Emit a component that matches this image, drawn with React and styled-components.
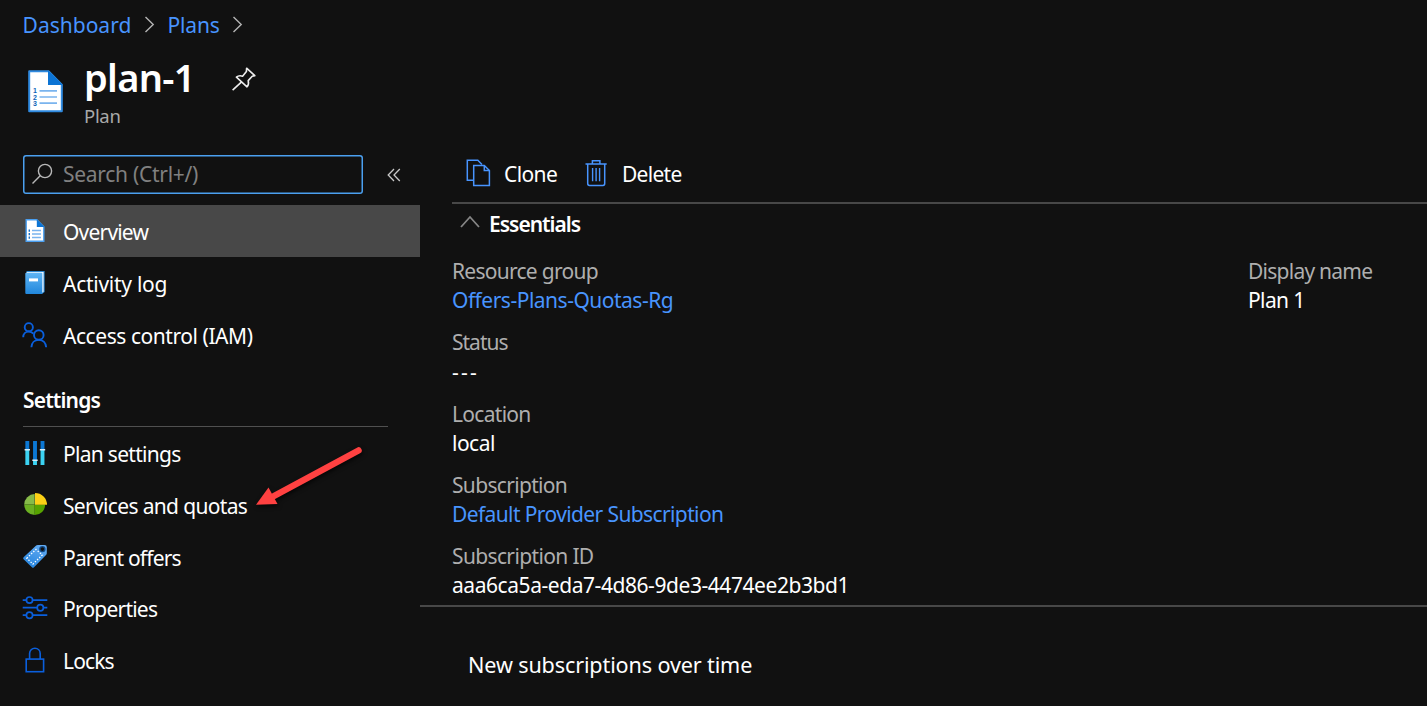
import React from "react";
import styled, { createGlobalStyle } from "styled-components";

const Global = createGlobalStyle`
  * { box-sizing: border-box; }
  body { margin: 0; background: #111; overflow: hidden; }
`;

const Page = styled.div`
  position: relative;
  width: 1427px;
  height: 706px;
  overflow: hidden;
  background: #111;
  color: #fff;
  font-family: "Noto Sans", "Open Sans", sans-serif;
  font-size: 21px;
  line-height: 30px;
`;

const Text = styled.span`
  white-space: nowrap;
  letter-spacing: ${(p) => p.$ls || 0}px;
  color: ${(p) => p.$color || "inherit"};
`;

const Breadcrumb = styled.nav`
  display: flex;
  align-items: center;
  height: 50px;
  padding-left: 22.6px;
`;

const Crumb = styled(Text)`
  width: ${(p) => p.$w}px;
  color: #4894fe;
`;

const Chevron = styled.svg`
  display: block;
  margin-right: ${(p) => p.$gap || 0}px;
`;

const Header = styled.header`
  display: flex;
  height: 95px;
  padding: 3px 0 0 26px;
`;

const HeaderIcon = styled.svg`
  display: block;
  margin-top: 15px;
  flex: none;
`;

const TitleBlock = styled.div`
  display: flex;
  flex-direction: column;
  width: 147px;
  margin-left: 18px;
`;

const Title = styled.h1`
  margin: 0 0 1px;
  font-size: 38px;
  line-height: 48px;
  font-weight: 600;
  white-space: nowrap;
  letter-spacing: ${(p) => p.$ls}px;
`;

const Subtitle = styled(Text)`
  font-size: 18.5px;
  line-height: 28px;
  color: #a9a9a9;
`;

const Pin = styled.svg`
  display: block;
  margin-top: 14px;
`;

const Body = styled.div`
  display: flex;
  height: 561px;
`;

const Sidebar = styled.aside`
  width: 420px;
  flex: none;
  padding-top: 10px;
`;

const SearchRow = styled.div`
  display: flex;
  align-items: center;
  padding-left: 22.5px;
  margin-bottom: 11px;
`;

const SearchBox = styled.div`
  display: flex;
  align-items: center;
  width: 340.5px;
  height: 39px;
  padding: 0 0 2px 8px;
  box-shadow: inset 0 0 0 1.5px #4ba0f0;
  border-radius: 3px;
  gap: 10.5px;
`;

const Collapse = styled.svg`
  display: block;
  margin-left: 24px;
`;

const NavItem = styled.div`
  display: flex;
  align-items: center;
  height: 51.82px;
  padding: 2px 0 0 22px;
  gap: 15px;
  background: ${(p) => (p.$active ? "#484848" : "transparent")};
  svg { display: block; flex: none; margin-top: -2px; }
`;

const Section = styled.div`
  width: 365px;
  height: 66px;
  margin: 0.24px 0 0.4px 23px;
  padding-top: 24px;
  border-bottom: 1px solid #505050;
  font-weight: 600;
`;

const Main = styled.main`
  flex: 1;
  display: flex;
  flex-direction: column;
`;

const Toolbar = styled.div`
  display: flex;
  align-items: center;
  height: 59px;
  margin-left: 32px;
  padding: 1px 0 0 14px;
  border-bottom: 2px solid #484848;
`;

const ToolButton = styled.div`
  display: flex;
  align-items: center;
  width: ${(p) => p.$w}px;
  gap: 13px;
  svg { display: block; margin-top: -2px; }
`;

const EssentialsHead = styled.div`
  display: flex;
  align-items: center;
  gap: 8px;
  height: 39px;
  margin-left: 41px;
  font-weight: 600;
  svg { display: block; margin: -3px 1px 0 -1px; }
`;

const Essentials = styled.div`
  display: flex;
  height: 364px;
  padding: 14px 0 0 32px;
  border-bottom: 2px solid #484848;
`;

const Column = styled.div`
  display: flex;
  flex-direction: column;
  width: ${(p) => p.$w}px;
`;

const Field = styled.div`
  display: flex;
  flex-direction: column;
  height: 71.3px;
  line-height: 29.3px;
  flex: none;
`;

const ChartTitle = styled.div`
  padding: 43px 0 0 48px;
  font-size: 21.6px;
`;

const Arrow = styled.svg`
  position: absolute;
  left: 250px;
  top: 438px;
  pointer-events: none;
  filter: drop-shadow(1px 2px 2px rgba(0, 0, 0, 0.7));
`;

const RightChevron = ({ gap }) => (
  <Chevron $gap={gap} width="12" height="18" viewBox="0 0 12 18" fill="none" stroke="#b4b4b4" strokeWidth="1.4">
    <path d="M1.5 1 L9.2 8.5 L1.5 16" />
  </Chevron>
);

const OverviewIcon = () => (
  <svg width="26" height="26" viewBox="0 0 26 26">
    <path d="M4.2 1.7H14.8L21.8 8.7V23.3H4.2Z" fill="#fff" stroke="#4b9ff0" strokeWidth="1.4" />
    <path d="M14.8 1.2V9H22.5Z" fill="#0c74d4" />
    <path d="M10 12.5H19M10 16H19M10 19.5H19" stroke="#7ab4ee" strokeWidth="1.3" />
    <path d="M7.3 11.5V20.7" stroke="#1d72c8" strokeWidth="1.4" strokeDasharray="2.2 1.3" />
  </svg>
);

const LogIcon = () => (
  <svg width="26" height="26" viewBox="0 0 26 26">
    <defs>
      <linearGradient id="book" x1="0" y1="0" x2="0" y2="1">
        <stop offset="0" stopColor="#5eb4f4" />
        <stop offset="1" stopColor="#2187dc" />
      </linearGradient>
    </defs>
    <path d="M4.5 1H22.6V22L20 24H5.5Z" fill="#2c86cf" />
    <path d="M4.5 1.9H21.6V21.7L19.8 23V4H5Z" fill="#eef6fd" />
    <rect x="3.3" y="2.8" width="17" height="21.2" rx="1" fill="url(#book)" />
    <rect x="7" y="8.4" width="9" height="3" fill="#fff" />
  </svg>
);

const AccessIcon = () => (
  <svg width="26" height="26" viewBox="0 0 26 26" fill="none" stroke="#0a5fdc" strokeWidth="1.9">
    <circle cx="6.8" cy="5.2" r="4.1" />
    <path d="M1.2 15.3C1.2 11.7 3.5 9.6 6.6 9.6C8.6 9.6 10.2 10.3 11.4 11.6" />
    <circle cx="16.8" cy="13" r="4.8" />
    <path d="M9.4 25.3C9.6 20.8 12.6 17.9 16.8 17.9C21 17.9 23.9 20.8 24.2 25.3" />
  </svg>
);

const SlidersIcon = () => (
  <svg width="26" height="26" viewBox="0 0 26 26">
    <path d="M5.3 1V10M13 1V20M20.5 1V10" stroke="#0c78d4" strokeWidth="3.9" />
    <path d="M5.3 10V25M13 20.5V25M20.5 10V25" stroke="#3bd2f2" strokeWidth="3.9" />
    <path d="M2.6 9.8H8M10.3 20.2H15.7M17.8 9.8H23.2" stroke="#d8eefa" strokeWidth="1.5" />
  </svg>
);

const PieIcon = () => (
  <svg width="26" height="26" viewBox="0 0 26 26">
    <path d="M12.7 12.6V2.1A10.5 10.5 0 0 0 2.2 12.6Z" fill="#86bb49" />
    <path d="M12.7 12.6H2.2A10.5 10.5 0 0 0 12.7 23.1Z" fill="#6bb022" />
    <path d="M12.7 12.6V23.1A10.5 10.5 0 0 0 23.2 12.6Z" fill="#57a300" />
    <path d="M13 12.8V0.9A12 11.7 0 0 1 25 12.8Z" fill="#fcd116" />
  </svg>
);

const TagIcon = () => (
  <svg width="26" height="26" viewBox="0 0 26 26">
    <defs>
      <linearGradient id="tag" x1="0.7" y1="0" x2="0.3" y2="1">
        <stop offset="0" stopColor="#62abf3" />
        <stop offset="1" stopColor="#2483dc" />
      </linearGradient>
    </defs>
    <path d="M1.6 13.2L13.6 1.9Q14.5 1 16 1H22.5Q24.8 1 24.8 3.2V9.2Q24.8 10.2 24 11L12 23.3Q10.9 24.3 9.9 23.3L1.6 15.2Q.6 14.2 1.6 13.2Z" fill="url(#tag)" />
    <path d="M4.8 14.2L14 5.4L20.3 11L10.9 20.1Z" fill="none" stroke="#fff" strokeWidth="1.3" strokeDasharray="1.4 1.6" />
    <circle cx="20.4" cy="5.1" r="3.2" fill="#114a86" />
    <circle cx="20.4" cy="5.1" r="1.8" fill="#111" />
  </svg>
);

const PropertiesIcon = () => (
  <svg width="26" height="26" viewBox="0 0 26 26" fill="none" stroke="#0a5fdc" strokeWidth="1.7">
    <path d="M.7 5.1H4.4M10.6 5.1H25.3M.7 12.7H15.2M21.4 12.7H25.3M.7 20.2H4.4M10.6 20.2H25.3" />
    <circle cx="7.5" cy="5.1" r="3.1" />
    <circle cx="18.3" cy="12.7" r="3.1" />
    <circle cx="7.5" cy="20.2" r="3.1" />
  </svg>
);

const LockIcon = () => (
  <svg width="26" height="26" viewBox="0 0 26 26" fill="none" stroke="#0a5fdc" strokeWidth="1.6">
    <rect x="4.2" y="12.1" width="17.4" height="12.6" />
    <path d="M7.6 12V6.6C7.6 3.4 9.9 1.3 12.9 1.3C15.9 1.3 18.2 3.4 18.2 6.6V12" />
  </svg>
);

const topItems = [
  ["Overview", OverviewIcon, -0.8],
  ["Activity log", LogIcon, -0.27],
  ["Access control (IAM)", AccessIcon, -0.44],
];
const settingsItems = [
  ["Plan settings", SlidersIcon, -0.7],
  ["Services and quotas", PieIcon, -0.66],
  ["Parent offers", TagIcon, -0.81],
  ["Properties", PropertiesIcon, -0.78],
  ["Locks", LockIcon, -0.87],
];
const fields = [
  ["Resource group", -0.73, "Offers-Plans-Quotas-Rg", -0.5, true],
  ["Status", -1, "---", 2.2, false],
  ["Location", -0.7, "local", -0.5, false],
  ["Subscription", -0.68, "Default Provider Subscription", -0.61, true],
  ["Subscription ID", -0.64, "aaa6ca5a-eda7-4d86-9de3-4474ee2b3bd1", -0.44, false],
];

const Item = ({ data: [label, Icon, ls], active }) => (
  <NavItem $active={active}>
    <Icon />
    <Text $ls={ls}>{label}</Text>
  </NavItem>
);

const Info = ({ data: [label, ls, value, vls, link] }) => (
  <Field>
    <Text $ls={ls} $color="#aeaeae">{label}</Text>
    <Text $ls={vls} $color={link ? "#4894fe" : "#fff"}>{value}</Text>
  </Field>
);

export default function App() {
  return (
    <Page>
      <Global />
      <Breadcrumb>
        <Crumb $w={121}>Dashboard</Crumb>
        <RightChevron gap={12} />
        <Crumb $w={64} $ls={-0.2}>Plans</Crumb>
        <RightChevron />
      </Breadcrumb>
      <Header>
        <HeaderIcon width="40" height="46" viewBox="0 0 40 46">
          <path d="M3.2 3.2H22.5L35.8 16.6V43.2H3.2Z" fill="#fff" stroke="#2f8ae0" strokeWidth="2" strokeLinejoin="round" />
          <path d="M22 2.3V17H36.8Z" fill="#0c74d4" />
          <path d="M13.5 22.8H31M13.5 29H31M13.5 35.2H31" stroke="#7ab4ee" strokeWidth="1.7" />
          <g fill="#0c64b8" fontSize="7" fontWeight="700" fontFamily="Liberation Sans, sans-serif">
            <text x="7" y="25.2">1</text>
            <text x="7" y="31.6">2</text>
            <text x="7" y="38">3</text>
          </g>
        </HeaderIcon>
        <TitleBlock>
          <Title $ls={-0.7}>plan-1</Title>
          <Subtitle $ls={-0.3}>Plan</Subtitle>
        </TitleBlock>
        <Pin width="25" height="25" viewBox="0 0 25 25" fill="none" stroke="#eee" strokeWidth="1.6" strokeLinejoin="round">
          <path d="M15.6 1.2L23.8 8.6L21.2 9.2L17.2 13.6C17.9 16 17.5 18 16 19.8L5.4 10.2C7.2 8.6 9.4 8.4 11.6 9.2L15.4 4.6Z" />
          <path d="M10.6 14.8L1.6 23.2" />
        </Pin>
      </Header>
      <Body>
        <Sidebar>
          <SearchRow>
            <SearchBox>
              <svg width="22" height="22" viewBox="0 0 22 22" fill="none" stroke="#b8b8b8" strokeWidth="1.4">
                <circle cx="14" cy="8" r="6.6" />
                <path d="M9.4 12.6L1.5 20.4" />
              </svg>
              <Text $ls={-0.28} $color="#808080">Search (Ctrl+/)</Text>
            </SearchBox>
            <Collapse width="14" height="14" viewBox="0 0 14 14" fill="none" stroke="#c8c8c8" strokeWidth="1.3">
              <path d="M7 1L1.2 7L7 13M12.8 1L7 7L12.8 13" />
            </Collapse>
          </SearchRow>
          {topItems.map((d, i) => <Item key={d[0]} data={d} active={i === 0} />)}
          <Section><Text $ls={-0.85}>Settings</Text></Section>
          {settingsItems.map((d) => <Item key={d[0]} data={d} />)}
        </Sidebar>
        <Main>
          <Toolbar>
            <ToolButton $w={119}>
              <svg width="25" height="28" viewBox="0 0 25 28" fill="none" stroke="#4894fe" strokeWidth="1.5">
                <path d="M7.5 21.2H1.3V1.3H11.8L16 5.5" />
                <path d="M7.7 6.5H18.3L23.4 11.5V26.5H7.7Z" />
                <path d="M18.3 6.5V11.5H23.4" />
              </svg>
              <Text $ls={-0.6}>Clone</Text>
            </ToolButton>
            <ToolButton $w={110}>
              <svg width="24" height="28" viewBox="0 0 24 28" fill="none" stroke="#4894fe" strokeWidth="1.5">
                <path d="M.5 5.1H21.7M2.7 5.3V24.5Q2.7 26.4 4.5 26.4H18Q19.7 26.4 19.7 24.5V5.3M7.4 5V1.7H14.9V5" />
                <path d="M7.6 9V22.3M11.1 9V22.3M14.6 9V22.3" strokeWidth="1.4" />
              </svg>
              <Text $ls={-0.72}>Delete</Text>
            </ToolButton>
          </Toolbar>
          <EssentialsHead>
            <svg width="20" height="14" viewBox="0 0 20 14" fill="none" stroke="#858585" strokeWidth="1.8">
              <path d="M1 12L10 2L19 12" />
            </svg>
            <Text $ls={-1.01}>Essentials</Text>
          </EssentialsHead>
          <Essentials>
            <Column $w={796}>{fields.map((f) => <Info key={f[0]} data={f} />)}</Column>
            <Column $w={179}><Info data={["Display name", -0.75, "Plan 1", -0.6, false]} /></Column>
          </Essentials>
          <ChartTitle><Text $ls={-0.14}>New subscriptions over time</Text></ChartTitle>
        </Main>
      </Body>
      <Arrow width="120" height="75" viewBox="0 0 120 75">
        <path d="M108.5 12.5L24 58" stroke="#ff4141" strokeWidth="6.5" strokeLinecap="round" />
        <path d="M6 66.7L18.5 49.5L27.5 66Z" fill="#ff4141" />
      </Arrow>
    </Page>
  );
}
